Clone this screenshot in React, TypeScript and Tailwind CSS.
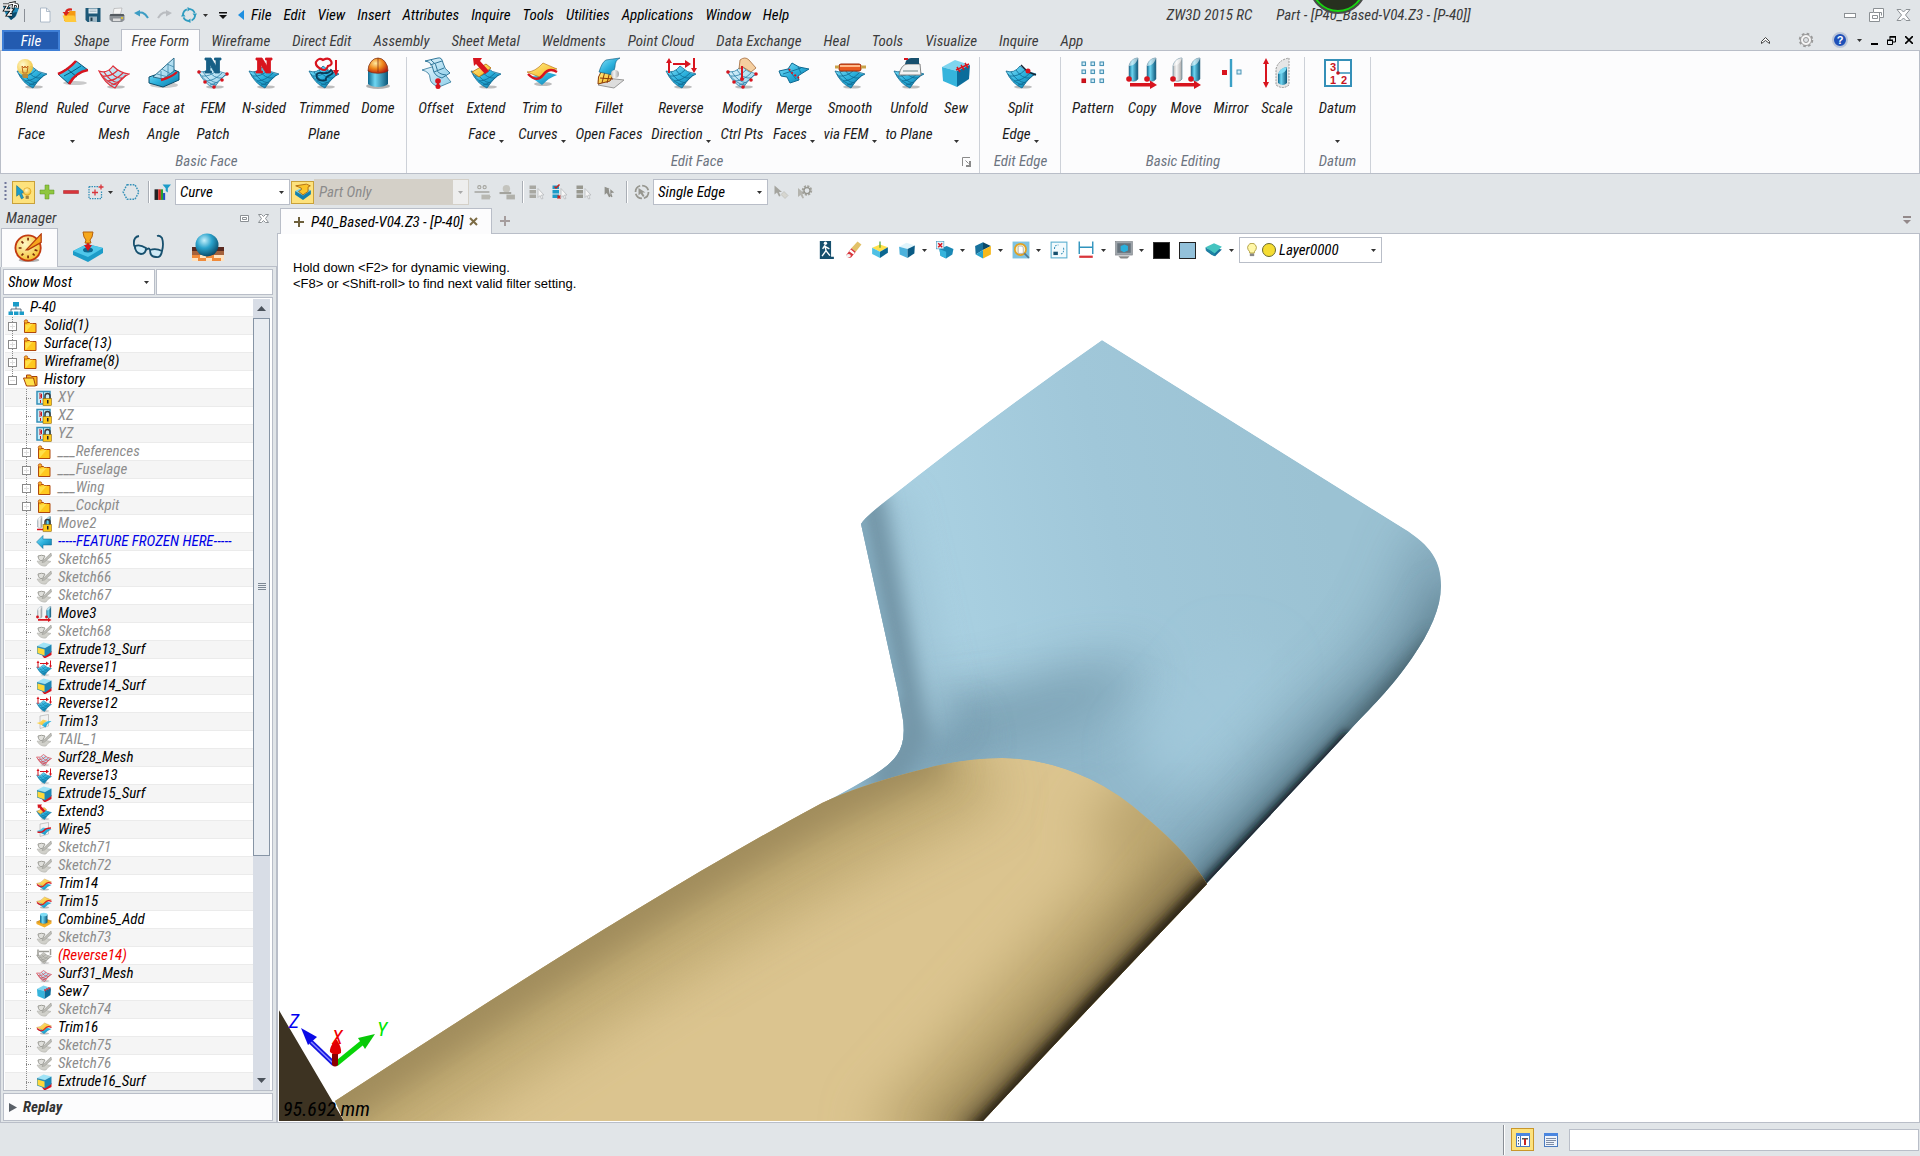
import React from "react";

type Kids = { children?: React.ReactNode };

/* ---------- icon building blocks (32 x 32 grid) ---------- */

function Ic({ s = 32, children }: Kids & { s?: number }) {
  return (
    <svg width={s} height={s} viewBox="0 0 32 32" fill="none" aria-hidden="true" className="shrink-0">
      {children}
    </svg>
  );
}

function Defs() {
  return (
    <svg width="0" height="0" className="absolute" aria-hidden="true">
      <defs>
        <linearGradient id="cy" x1="0" y1="0" x2="1" y2="1">
          <stop offset="0" stopColor="#8be2f8" />
          <stop offset=".5" stopColor="#2bb0dc" />
          <stop offset="1" stopColor="#0e75a2" />
        </linearGradient>
        <linearGradient id="cyl" x1="0" y1="0" x2="1" y2="0">
          <stop offset="0" stopColor="#0d6a92" />
          <stop offset=".35" stopColor="#6fd6f2" />
          <stop offset="1" stopColor="#0a5578" />
        </linearGradient>
        <linearGradient id="pale" x1="0" y1="0" x2="1" y2="1">
          <stop offset="0" stopColor="#e3f4fc" />
          <stop offset="1" stopColor="#8fcfea" />
        </linearGradient>
        <linearGradient id="gold" x1="0" y1="0" x2="1" y2="1">
          <stop offset="0" stopColor="#fff08a" />
          <stop offset="1" stopColor="#f5ae16" />
        </linearGradient>
        <linearGradient id="grey" x1="0" y1="0" x2="1" y2="0">
          <stop offset="0" stopColor="#b9b9b9" />
          <stop offset=".4" stopColor="#f4f4f4" />
          <stop offset="1" stopColor="#a5a5a5" />
        </linearGradient>
        <radialGradient id="dome" cx=".38" cy=".35" r=".7">
          <stop offset="0" stopColor="#ffe9a0" />
          <stop offset=".5" stopColor="#f08a1c" />
          <stop offset="1" stopColor="#b51d10" />
        </radialGradient>
        <radialGradient id="ball" cx=".38" cy=".3" r=".75">
          <stop offset="0" stopColor="#c5f0fb" />
          <stop offset=".45" stopColor="#2ba3cc" />
          <stop offset="1" stopColor="#08425f" />
        </radialGradient>
        <radialGradient id="sunny" cx=".38" cy=".35" r=".7">
          <stop offset="0" stopColor="#fff9c8" />
          <stop offset="1" stopColor="#f2bd27" />
        </radialGradient>
      </defs>
    </svg>
  );
}

function Patch({ fill = "url(#cy)", line = "#0f6a92", dots = false, w = 0.8 }: { fill?: string; line?: string; dots?: boolean; w?: number }) {
  return (
    <g>
      <ellipse cx="18" cy="30" rx="9" ry="1.6" fill="#000" opacity=".25" />
      <path d="M1 14Q9 17 15 9Q22 16 31 17Q24 20 17 31Q7 27 1 14Z" fill={fill} stroke={line} strokeWidth={w} />
      <path
        d="M5 19Q13 20 20 13M9 24Q17 24 25 16M6 15Q12 25 21 26M11 13Q17 22 25 21M13 28Q20 27 28 18M3 17Q10 27 19 28"
        stroke={line}
        strokeWidth={w}
      />
      {dots && (
        <g fill="#d8141e">
          <circle cx="2" cy="15" r="1.8" />
          <circle cx="30" cy="17" r="1.8" />
          <circle cx="17" cy="30" r="1.8" />
          <circle cx="8" cy="25" r="1.8" />
          <circle cx="25" cy="23" r="1.8" />
        </g>
      )}
    </g>
  );
}

const Bulb = () => (
  <g>
    <circle cx="9" cy="10" r="8" fill="url(#sunny)" opacity=".92" />
    <path d="M7 16L6 9l2 2 1-2 1 2 2-2-1 7z" stroke="#c0641a" />
    <path d="M6 17h6v4H7z" fill="#b98b3a" />
  </g>
);

const NGlyph = ({ fill }: { fill: string }) => (
  <path d="M8 16V14h1.500V3H8V1h6l5 8V3h-1.500V1H24v2h-1.500v13H18l-5-8v6h1.500v2z" fill={fill} stroke={fill} strokeWidth=".8" />
);

const Cube = ({ a = "#9fe3f6", b = "#2099c6", c = "#0a5b85" }: { a?: string; b?: string; c?: string }) => (
  <g>
    <path d="M2 10L15 3l15 5-13 6z" fill={a} />
    <path d="M2 10l15 4v16L3 24z" fill={b} />
    <path d="M30 8L17 14v16l12-8z" fill={c} />
  </g>
);

const Prism = ({ x, fill }: { x: number; fill: string }) => (
  <g transform={`translate(${x} 0)`}>
    <path d="M0 9C1 4 5 1 9 1v21c-2 3-7 3-9 0z" fill={fill} stroke="#4d7890" strokeWidth=".6" />
    <path d="M0 9C1 4 5 1 9 1c-1 4-4 8-9 8z" fill="#fff" opacity=".55" />
  </g>
);

const RightArrow = () => <path d="M4 26h20v-2.500l7 4.500-7 4V29.500H4z" fill="#d8141e" />;

const Lock = () => (
  <g>
    <path d="M18 18v-6a5 5 0 0 1 10 0v6" stroke="#3a3a3a" strokeWidth="3" />
    <rect x="14" y="17" width="17" height="14" fill="#fdc81a" stroke="#7a5200" />
    <path d="M22 20h3v7h-3z" fill="#222" />
  </g>
);

const icons: Record<string, React.ReactNode> = {
  blend: (<><Patch /><Bulb /></>),
  ruled: (
    <>
      <ellipse cx="18" cy="26" rx="12" ry="2" fill="#000" opacity=".2" />
      <path d="M1 17Q10 13 19 4l12 9Q19 16 12 27z" fill="url(#cy)" stroke="#0b567a" />
      <path d="M7 19Q15 15 24 9M9 11l11 9" stroke="#0b567a" />
      <path d="M1 17Q11 13 19 4M12 27Q19 15 31 13" stroke="#d8141e" strokeWidth="2.600" />
    </>
  ),
  mesh: <Patch fill="url(#pale)" line="#e0303a" w={1.2} />,
  faceat: (
    <>
      <ellipse cx="16" cy="28" rx="14" ry="3" fill="#000" opacity=".2" />
      <path d="M1 20L24 12l7 3v8L15 30 1 26z" fill="url(#cy)" stroke="#0b4c6c" />
      <path d="M5 20L26 1v13L15 22z" fill="url(#pale)" stroke="#2a6d8c" />
      <path d="M9 17l11 3M14 12l9 5M19 7l7 3M13 14v8M20 7v11" stroke="#3b86a8" strokeWidth=".8" />
      <path d="M13 23Q24 20 29 15" stroke="#d8141e" strokeWidth="2.400" />
    </>
  ),
  fem: (<><Patch fill="url(#pale)" line="#2a7ea6" dots /><NGlyph fill="#175f86" /></>),
  nsided: (<><Patch /><NGlyph fill="#d8141e" /></>),
  trimmed: (
    <>
      <Patch />
      <path d="M9 21q-2-6 5-5t9-3q4 3-1 5t-4 5q-6 2-9-2z" stroke="#0a3b58" strokeWidth="1.800" />
      <path d="M8 5q3-5 7-2 6-3 8 1 2 4-3 5-2 6-7 3Q7 9 8 5z" stroke="#d8141e" strokeWidth="2.200" />
      <path d="M28 3v12" stroke="#d8141e" strokeWidth="2" />
      <path d="M25 13h6l-3 6z" fill="#d8141e" />
    </>
  ),
  dome: (
    <>
      <ellipse cx="16" cy="29" rx="12" ry="3" fill="#000" opacity=".3" />
      <path d="M6 13h20v14c-4 4-16 4-20 0z" fill="url(#cyl)" />
      <path d="M6 14a10 13 0 0 1 20 0c-5 3-15 3-20 0z" fill="url(#dome)" stroke="#7a2a10" strokeWidth=".7" />
      <path d="M16 1v14" stroke="#7a2a10" strokeWidth=".7" />
    </>
  ),
  offset: (
    <>
      <path d="M2 13Q10 15 10 21T19 30L31 25Q26 20 24 14T15 9z" fill="url(#pale)" stroke="#2f7699" strokeWidth=".8" />
      <path d="M5 4Q12 5 13 12T22 21L30 16Q24 12 23 6T18 1z" fill="url(#pale)" stroke="#2f7699" />
      <path d="M11 3q6 4 6 9t9 6M10 8l12-4M14 15l10-4" stroke="#2f7699" />
      <path d="M18 25v5" stroke="#d8141e" strokeWidth="2" />
      <circle cx="18" cy="24" r="2.800" fill="#d8141e" />
      <circle cx="18" cy="29.500" r="2.500" fill="#d8141e" />
    </>
  ),
  extend: (
    <>
      <Patch />
      <path d="M2 15l14-8 5 4-12 9z" fill="url(#gold)" stroke="#b46a0a" strokeWidth=".8" />
      <path d="M3 1h9l-2 3 9 10-4 3L6 7 4 9z" fill="#d8141e" />
    </>
  ),
  trim: (
    <>
      <ellipse cx="17" cy="27" rx="9" ry="2" fill="#000" opacity=".25" />
      <path d="M3 19q8 1 14-5l14 4Q24 20 16 28z" fill="url(#cy)" />
      <path d="M1 15Q9 15 17 6l14 6q-9 0-15 9z" fill="url(#gold)" stroke="#b46a0a" strokeWidth=".6" />
      <path d="M2 17q9 9 15 1t14-3" stroke="#d8141e" strokeWidth="2.400" />
    </>
  ),
  fillet: (
    <>
      <path d="M5 28l8-7 18 2-10 8z" fill="#ddd" stroke="#999" />
      <path d="M5 27Q4 20 9 13l14 1q-4 5-6 10z" fill="url(#gold)" stroke="#8a3a08" />
      <path d="M7 21l13 1M12 14l-3 12M17 14l-3 12" stroke="#8a3a08" />
      <path d="M6 15Q9 5 13 3q6-1 14-2-5 2-5 9-1 3-2 8z" fill="url(#cy)" stroke="#0b567a" strokeWidth=".6" />
      <circle cx="22" cy="17" r="4" fill="url(#grey)" />
    </>
  ),
  reverse: (
    <>
      <Patch />
      <path d="M4 16V4M29 1v12" stroke="#d8141e" strokeWidth="2" />
      <path d="M1 6l3-5 3 5zM26 11h6l-3 5z" fill="#d8141e" />
      <path d="M8 6h12V3l6 4-6 4V8H8z" fill="#d8141e" />
    </>
  ),
  modify: (
    <>
      <Patch fill="url(#pale)" line="#2a7ea6" dots />
      <path d="M14 3q5-4 9 0l7 8-5 4-8-5-4 2z" fill="#f5cfa0" stroke="#a2683a" strokeWidth=".8" />
      <path d="M16 9v12" stroke="#d8141e" strokeWidth="2" />
      <circle cx="16" cy="22" r="2" fill="#d8141e" />
    </>
  ),
  merge: (
    <>
      <path d="M1 14l9-2 4-6 7 4 10 2-8 5-3 2 1 4-9 3-3-6-6-1z" fill="url(#cy)" stroke="#0f6a92" />
      <path d="M5 17l18-6M10 12l8 10M20 10l3 6" stroke="#0f6a92" strokeWidth=".8" />
      <path d="M11 12l3 4 7 5" stroke="#d8141e" strokeWidth="1.800" strokeDasharray="2 2" />
    </>
  ),
  smooth: (
    <>
      <Patch />
      <rect x="5" y="7" width="22" height="7" rx="2" fill="#e85a20" stroke="#9c2a0a" />
      <rect x="6" y="8" width="20" height="2" fill="#ffb98a" />
      <path d="M1 10h4M27 10h5" stroke="#c9a24a" strokeWidth="3" />
    </>
  ),
  unfold: (
    <>
      <Patch />
      <path d="M6 18q2-11 9-11h12l1 11z" fill="#f3f3f3" stroke="#888" />
      <path d="M12 7q1-6 6-6h8v6" fill="#18506e" />
      <path d="M10 14h15" stroke="#9aa" strokeWidth="1.500" />
      <path d="M11 2h4" stroke="#d8141e" strokeWidth="2" />
    </>
  ),
  sew: (
    <>
      <Cube a="#7fd5ef" b="#35b4dc" c="#0b6d9b" />
      <path d="M16 13l13-6M17 10l3 5M21 8l3 5M25 6l3 5" stroke="#d8141e" strokeWidth="1.500" />
    </>
  ),
  split: (
    <>
      <Patch />
      <path d="M16 8l7 7 8 3" stroke="#123" strokeWidth="1.400" />
      <circle cx="23" cy="14" r="2.500" fill="#d8141e" />
    </>
  ),
  pattern: (
    <>
      {[5, 14, 23].map((x) =>
        [5, 13, 22].map((y) => (
          <rect key={`${x}-${y}`} x={x} y={y} width="3.500" height="3.500" fill={x === 5 && y === 22 ? "#d8141e" : "#d5eef8"} stroke={x === 5 && y === 22 ? "#c01018" : "#4a93b5"} strokeWidth="1.100" />
        ))
      )}
    </>
  ),
  copy: (
    <>
      <Prism x={3} fill="url(#cyl)" />
      <Prism x={21} fill="url(#cyl)" />
      <circle cx="3" cy="22" r="2.800" fill="#d8141e" />
      <circle cx="21" cy="22" r="2.800" fill="#d8141e" />
      <RightArrow />
    </>
  ),
  move: (
    <>
      <Prism x={3} fill="url(#grey)" />
      <Prism x={21} fill="url(#cyl)" />
      <circle cx="3" cy="22" r="2.800" fill="#d8141e" />
      <circle cx="21" cy="22" r="2.800" fill="#d8141e" />
      <RightArrow />
    </>
  ),
  mirror: (
    <>
      <path d="M16 2v28" stroke="#3aa0c6" strokeWidth="2.400" />
      <rect x="7" y="13" width="5" height="5" fill="#d8141e" />
      <rect x="22" y="13" width="4" height="4" fill="#d5eef8" stroke="#4a93b5" />
    </>
  ),
  scale: (
    <>
      <path d="M5 5v22" stroke="#d8141e" strokeWidth="2" />
      <path d="M2 7l3-6 3 6zM2 25h6l-3 6z" fill="#d8141e" />
      <path d="M15 12q2-9 13-11v27q-6 5-13 0z" fill="#e6e6e6" stroke="#999" strokeDasharray="2 1" />
      <path d="M17 17q2-6 9-7v16q-4 4-9 0z" fill="url(#cyl)" />
      <path d="M17 17q2-6 9-7-1 7-9 7z" fill="#7fdcf5" />
    </>
  ),
  datum: (
    <>
      <rect x="3" y="3" width="26" height="26" fill="#fff" stroke="#3590b8" strokeWidth="2" />
      <path d="M16 3v13h13" stroke="#3590b8" strokeWidth="1.600" />
      <g fill="#c8141e" fontFamily="Liberation Sans, sans-serif" fontWeight="700" fontStyle="normal" fontSize="11">
        <text x="8" y="14">3</text>
        <text x="8" y="27">1</text>
        <text x="19" y="27">2</text>
      </g>
      <circle cx="16" cy="16" r="1.800" fill="#c8141e" />
    </>
  ),
  folder: (
    <>
      <path d="M5 9h10l2 2h11v18H5z" fill="#ffc81e" stroke="#b0480c" strokeWidth="2" />
      <path d="M7 28V14L22 11z" fill="#ffe04a" />
      <circle cx="8" cy="7" r="3.500" fill="#fbb72d" stroke="#b0480c" strokeWidth="1.500" />
    </>
  ),
  open: (
    <>
      <path d="M9 6h8l2 3h11v18H9z" fill="#f9b81c" stroke="#a8420a" strokeWidth="2" />
      <path d="M3 12h20l4 16H9z" fill="#ffe14a" stroke="#a8420a" strokeWidth="2" />
    </>
  ),
  root: (
    <>
      <path d="M16 10v8M6 24v-6h20v6" stroke="#345" strokeWidth="1.500" />
      <path d="M10 4h12v9H10zM1 23h9v7H1zM12 23h9v7h-9zM23 23h9v7h-9z" fill="#1c9cc8" />
    </>
  ),
  plane: (
    <>
      <rect x="2" y="3" width="26" height="25" fill="#c9ecf8" stroke="#3590b8" strokeWidth="3" />
      <path d="M15 3v25" stroke="#3590b8" strokeWidth="2" />
      <path d="M6 8h5v4H7h4v4H6M9 20v6" stroke="#c8141e" strokeWidth="2" />
      <Lock />
    </>
  ),
  moveLock: (
    <>
      <Prism x={3} fill="url(#grey)" />
      <Prism x={20} fill="url(#cyl)" />
      <path d="M2 27h12" stroke="#d8141e" strokeWidth="3" />
      <Lock />
    </>
  ),
  frozen: <path d="M1 16L14 3v7h17v12H14v7z" fill="url(#cy)" stroke="#0b6790" />,
  sketch: (
    <>
      <path d="M2 18q6 2 10-3l18 4q-7 3-10 9Q8 30 2 18z" fill="#d0d0ca" stroke="#a8a8a2" />
      <path d="M4 8q7-3 14 0l-5 9q-8 2-9-9z" fill="#e0e0dc" stroke="#9c9c96" strokeWidth="2" />
      <path d="M30 2L14 17l-2 4 5-1L31 8z" fill="#bcbcb6" stroke="#94948e" />
    </>
  ),
  extrude: (
    <>
      <path d="M12 27l19-9v8l-14 7z" fill="#d8141e" />
      <path d="M2 8L15 1l16 4-13 7z" fill="#9fe3f6" />
      <path d="M2 8l16 4v17L2 23z" fill="#2b8fb8" />
      <path d="M3 11l14 4v12L3 22z" fill="#ffd83a" />
      <path d="M31 5l-13 7v17l13-9z" fill="#1c86b4" />
    </>
  ),
  trimPlane: (
    <>
      <path d="M8 4l17-3v23L8 29z" fill="#f2f2f2" stroke="#999" />
      <path d="M1 18q8-1 13-7l9 3q-7 1-9 9z" fill="url(#gold)" />
      <path d="M12 23q5-10 19-9-8 4-12 13z" fill="url(#cy)" />
    </>
  ),
  wire: (
    <>
      <path d="M8 4l17-3v23L8 29z" fill="#f2f2f2" stroke="#999" />
      <path d="M1 18q8-1 13-7l17 4q-9 3-13 11z" fill="url(#cy)" />
      <path d="M3 20q9 2 13-3t14-5" stroke="#d8141e" strokeWidth="3" />
    </>
  ),
  combine: (
    <>
      <path d="M1 20l15-7 15 5-13 10z" fill="#eda412" stroke="#a8640a" />
      <path d="M8 5h15v16q-7 5-15 0z" fill="url(#cyl)" />
      <ellipse cx="15.500" cy="5" rx="7.500" ry="3.500" fill="#7fdcf5" />
      <path d="M1 20l15 6 15-7v4l-14 8-16-7z" fill="#f4b028" />
    </>
  ),
  greyReverse: (
    <>
      <Patch fill="#c4c4be" line="#8c8c86" />
      <path d="M4 16V3M29 2v12M6 7h20" stroke="#9a9a94" strokeWidth="3" />
    </>
  ),
};

const Icon = ({ n, s = 32 }: { n: string; s?: number }) => <Ic s={s}>{icons[n]}</Ic>;

const Caret = ({ c = "#333" }: { c?: string }) => (
  <svg width="5" height="3" viewBox="0 0 5 3" aria-hidden="true" className="shrink-0">
    <path d="M0 0h5L2.500 3z" fill={c} />
  </svg>
);

/* ---------- title bar, menus and ribbon tabs ---------- */

const menus = ["File", "Edit", "View", "Insert", "Attributes", "Inquire", "Tools", "Utilities", "Applications", "Window", "Help"];

function TitleBar() {
  return (
    <header className="relative flex h-[30px] shrink-0 items-center">
      <div className="flex w-[251px] shrink-0 items-center">
        <svg width="18" height="20" viewBox="0 0 18 20" className="ml-[2px] -mt-2" aria-hidden="true">
          <path d="M1 5l16 2-3 8-5 4-5-5z" fill="#1f86b4" />
          <path d="M5 13l4 6 4-3 2-5z" fill="#0c4a6c" />
          <path d="M1 4h5l-3 5h4M7 3l5-1-1 5M9 6l0 6M12 3q5 0 3 4M5 9h5l-4 5h4" stroke="#111" strokeWidth="3" fill="none" />
          <path d="M1 4h5l-3 5h4M7 3l5-1-1 5M9 6l0 6M12 3q5 0 3 4M5 9h5l-4 5h4" stroke="#fff" strokeWidth="1.300" fill="none" />
        </svg>
        <span className="ml-1 h-[13px] w-px bg-[#8a8f96]" />
        <div className="ml-[12px] flex items-center gap-2">
          <button aria-label="New">
            <Ic s={16}><path d="M7 2h12l7 7v21H7z" fill="#fff" stroke="#9ab" strokeWidth="1.500" /><path d="M19 2v7h7" stroke="#9ab" strokeWidth="1.500" /></Ic>
          </button>
          <button aria-label="Open">
            <Ic s={16}><path d="M6 12h9l2-4h12v20H6z" fill="#f59a12" /><path d="M3 17h24l4 13H8z" fill="#ffc93c" /><path d="M22 3Q10 1 8 10H3l7 8 7-8h-4q1-4 9-3z" fill="#d8241e" /></Ic>
          </button>
          <button aria-label="Save">
            <Ic s={16}><path d="M1 2h30v28H5l-4-4z" fill="#1d5877" /><path d="M7 3h18v10H7z" fill="#e4edf2" /><path d="M8 19h16v11H8z" fill="#9fb7c4" /><path d="M11 21h4v7h-4z" fill="#1d3b4c" /><path d="M9 6h14M9 9h14" stroke="#7c97a5" /></Ic>
          </button>
          <button aria-label="Print">
            <Ic s={16}><path d="M10 3l16-1-3 12H8z" fill="#f5f5f5" stroke="#999" /><path d="M3 14h26l2 4v8l-5 4H6l-5-5v-6z" fill="#8b9095" /><path d="M3 14h26l2 4H1z" fill="#555b61" /><path d="M8 23h15v5H8z" fill="#ddd" /><circle cx="26" cy="22" r="2" fill="#f0d020" /></Ic>
          </button>
          <button aria-label="Undo">
            <Ic s={16}><path d="M7 14Q20 5 30 22" stroke="#3d9dc4" strokeWidth="4" /><path d="M2 12l12-6v13z" fill="#3d9dc4" /></Ic>
          </button>
          <button aria-label="Redo">
            <Ic s={16}><path d="M25 14Q12 5 2 22" stroke="#b9bcc0" strokeWidth="4" /><path d="M30 12L18 6v13z" fill="#b9bcc0" /></Ic>
          </button>
          <button aria-label="Regenerate">
            <Ic s={16}><circle cx="16" cy="16" r="12" stroke="#2f9cc0" strokeWidth="3.500" strokeDasharray="13 5.800" /><path d="M13 0l7 4-7 5zM19 32l-7-4 7-5zM0 19l4-7 5 7zM32 13l-4 7-5-7z" fill="#2f9cc0" /></Ic>
          </button>
        </div>
        <div className="ml-[6px] flex items-center gap-[11px]">
          <Caret />
          <svg width="8" height="7" viewBox="0 0 8 7" aria-hidden="true"><path d="M0 0h8v1.500H0zM0 3h8L4 7z" fill="#111" /></svg>
          <svg width="6" height="10" viewBox="0 0 6 10" aria-hidden="true"><path d="M6 0v10L0 5z" fill="#1e8fe0" /></svg>
        </div>
      </div>
      <nav className="flex gap-3 text-black">
        {menus.map((m) => (
          <button key={m}>{m}</button>
        ))}
      </nav>
      <div className="flex flex-1 justify-center gap-6 pl-1 text-[#3a3a3a]">
        <span>ZW3D 2015 RC</span>
        <h1>Part - [P40_Based-V04.Z3 - [P-40]]</h1>
      </div>
      <div className="flex items-center gap-3 pr-[9px]">
        <button aria-label="Minimise window">
          <svg width="13" height="14" viewBox="0 0 13 14"><rect x=".5" y="5.500" width="11" height="4" fill="#fff" stroke="#8b9094" /></svg>
        </button>
        <button aria-label="Restore window">
          <svg width="15" height="14" viewBox="0 0 15 14"><path d="M4.500.5h10v9h-4v4h-10v-9h4z" fill="#fff" stroke="#8b9094" /><path d="M3.500 7.500h5v3h-5zM9.500 4.500h3v3M5 4.500h5.500v5" fill="none" stroke="#8b9094" /></svg>
        </button>
        <button aria-label="Close window">
          <svg width="15" height="12" viewBox="0 0 15 12"><path d="M1 .5h4L7.500 3 10 .5h4L9.500 6l4.500 5.500h-4L7.500 9 5 11.500H1L5.500 6z" fill="#fff" stroke="#8b9094" /></svg>
        </button>
      </div>
      <svg width="60" height="16" viewBox="0 0 60 16" className="absolute top-0 left-[1308px]" aria-hidden="true">
        <circle cx="30" cy="-15" r="28" fill="#27301f" stroke="#4a4a4a" strokeWidth="2" />
        <circle cx="30" cy="-15" r="26" fill="#27301f" stroke="#19d313" strokeWidth="2" />
      </svg>
    </header>
  );
}

const tabs = ["Shape", "Free Form", "Wireframe", "Direct Edit", "Assembly", "Sheet Metal", "Weldments", "Point Cloud", "Data Exchange", "Heal", "Tools", "Visualize", "Inquire", "App"];

function RibbonTabs() {
  return (
    <div className="flex h-[21px] shrink-0 items-stretch border-b border-[#b9bec8] text-[#3c3c3c]">
      <button className="ml-[2px] h-[21px] w-[58px] border-2 border-[#3f7fd6] bg-[#235bb0] leading-[18px] text-white">File</button>
      <div role="tablist" className="ml-[3px] flex">
        {tabs.map((t) =>
          t === "Free Form" ? (
            <button key={t} role="tab" aria-selected="true" className="-mt-px h-[22px] border border-b-0 border-[#b9bec8] bg-[#fcfcfd] px-[10px] leading-[23px]">{t}</button>
          ) : (
            <button key={t} role="tab" aria-selected="false" className="px-[11px] leading-[22px]">{t}</button>
          )
        )}
      </div>
      <div className="ml-auto flex items-center pr-[7px] text-black">
        <svg width="9" height="7" viewBox="0 0 9 7" className="mr-[28px]"><path d="M.5 6.500v-2l4-4 4 4v2l-4-3z" fill="#fff" stroke="#444" /></svg>
        <button aria-label="Settings" className="mr-[18px]">
          <svg width="16" height="16" viewBox="0 0 16 16" fill="#f5f5f5" stroke="#999">
            <circle cx="8" cy="8" r="6" strokeWidth="2.500" strokeDasharray="2.500 2.200" />
            <circle cx="8" cy="8" r="5.500" />
            <circle cx="8" cy="8" r="2.500" fill="#dfe3e6" />
          </svg>
        </button>
        <button aria-label="Help" className="mr-[9px] flex size-4 items-center justify-center rounded-full border-2 border-[#b9c4d8] bg-[#1e50b8] font-[Liberation_Sans] text-[11px] font-bold text-white not-italic leading-none">?</button>
        <Caret />
        <button aria-label="Minimise document" className="ml-[9px]"><svg width="7" height="10" viewBox="0 0 7 10"><path d="M0 8h7v2H0z" /></svg></button>
        <button aria-label="Restore document" className="ml-[9px]"><svg width="9" height="9" viewBox="0 0 9 9"><path d="M.5 4.500h5v4h-5zM3 4V1h5.500v5H6" fill="none" stroke="#000" /><path d="M0 3.500h6v1.500H0zM2.500 0H9v1.500H2.500z" /></svg></button>
        <button aria-label="Close document" className="ml-[9px]"><svg width="8" height="8" viewBox="0 0 8 8"><path d="M0 0l8 8M8 0L0 8" stroke="#000" strokeWidth="1.600" /></svg></button>
      </div>
    </div>
  );
}

/* ---------- ribbon ---------- */

type Tool = { i: string; a: string; b?: string; drop?: boolean; w: string };

const groups: { name: string; pad: string; launcher?: boolean; tools: Tool[] }[] = [
  {
    name: "Basic Face",
    pad: "pl-[10px] pr-[4px]",
    tools: [
      { i: "blend", a: "Blend", b: "Face", w: "w-[41px]" },
      { i: "ruled", a: "Ruled", drop: true, w: "w-[41px]" },
      { i: "mesh", a: "Curve", b: "Mesh", w: "w-[42px]" },
      { i: "faceat", a: "Face at", b: "Angle", w: "w-[57px]" },
      { i: "fem", a: "FEM", b: "Patch", w: "w-[42px]" },
      { i: "nsided", a: "N-sided", w: "w-[60px]" },
      { i: "trimmed", a: "Trimmed", b: "Plane", w: "w-[60px]" },
      { i: "dome", a: "Dome", w: "w-[48px]" },
    ],
  },
  {
    name: "Edit Face",
    pad: "pl-[9px] pr-[1px]",
    launcher: true,
    tools: [
      { i: "offset", a: "Offset", w: "w-[40px]" },
      { i: "extend", a: "Extend", b: "Face", drop: true, w: "w-[60px]" },
      { i: "trim", a: "Trim to", b: "Curves", drop: true, w: "w-[52px]" },
      { i: "fillet", a: "Fillet", b: "Open Faces", w: "w-[82px]" },
      { i: "reverse", a: "Reverse", b: "Direction", drop: true, w: "w-[62px]" },
      { i: "modify", a: "Modify", b: "Ctrl Pts", w: "w-[60px]" },
      { i: "merge", a: "Merge", b: "Faces", drop: true, w: "w-[44px]" },
      { i: "smooth", a: "Smooth", b: "via FEM", drop: true, w: "w-[68px]" },
      { i: "unfold", a: "Unfold", b: "to Plane", w: "w-[50px]" },
      { i: "sew", a: "Sew", drop: true, w: "w-[44px]" },
    ],
  },
  { name: "Edit Edge", pad: "pl-[1px] pr-0", tools: [{ i: "split", a: "Split", b: "Edge", drop: true, w: "w-[79px]" }] },
  {
    name: "Basic Editing",
    pad: "pl-[6px] pr-[5px]",
    tools: [
      { i: "pattern", a: "Pattern", w: "w-[52px]" },
      { i: "copy", a: "Copy", w: "w-[46px]" },
      { i: "move", a: "Move", w: "w-[42px]" },
      { i: "mirror", a: "Mirror", w: "w-[48px]" },
      { i: "scale", a: "Scale", w: "w-[44px]" },
    ],
  },
  { name: "Datum", pad: "px-0", tools: [{ i: "datum", a: "Datum", drop: true, w: "w-[65px]" }] },
];

function Ribbon() {
  return (
    <section className="flex h-[123px] shrink-0 border-r border-b border-l border-[#b9bec8] bg-[#fcfcfd] pt-[6px]">
      {groups.map((grp) => (
        <div key={grp.name} className={`relative flex flex-col border-r border-[#cdd1d8] ${grp.pad}`}>
          <div className="flex flex-1">
            {grp.tools.map((t) => (
              <button key={t.a} className={`flex shrink-0 flex-col items-center whitespace-nowrap text-[#1b1b1b] ${t.w}`}>
                <Icon n={t.i} />
                <span className="mt-[6px] leading-[26px]">{t.a}</span>
                <span className="flex h-[26px] items-center leading-[26px]">
                  {t.b}
                  {t.drop && (
                    <span className={t.b ? "mt-[14px] ml-[3px]" : "mt-[14px]"}>
                      <Caret />
                    </span>
                  )}
                </span>
              </button>
            ))}
          </div>
          <h2 className="h-[24px] text-center leading-[24px] text-[#6c7480]">{grp.name}</h2>
          {grp.launcher && (
            <button aria-label="Edit Face options" className="absolute right-[8px] bottom-[6px]">
              <svg width="9" height="10" viewBox="0 0 9 10"><path d="M.5 9V.5H8M3.500 3.500l3 3" fill="none" stroke="#8a8a8a" /><path d="M9 4v6H4V8h3V4z" fill="#8a8a8a" /></svg>
            </button>
          )}
        </div>
      ))}
    </section>
  );
}

/* ---------- selection toolbar ---------- */

function Select({ label, value, w, disabled = false }: { label: string; value: string; w: string; disabled?: boolean }) {
  return (
    <span className={`relative flex h-[26px] items-center border ${w} ${disabled ? "border-[#d4d0c8] bg-[#d4d0c8]" : "border-[#b9bec8] bg-white"}`}>
      <select aria-label={label} disabled={disabled} className={`h-full w-full appearance-none bg-transparent pl-1 italic outline-none ${disabled ? "text-[#8b8b8b]" : "text-black"}`}>
        <option>{value}</option>
      </select>
      <span className={`pointer-events-none absolute inset-y-0 right-0 flex w-[15px] items-center justify-center ${disabled ? "bg-[#eeeeee]" : ""}`}>
        <Caret c={disabled ? "#a9a9a9" : "#333"} />
      </span>
    </span>
  );
}

const Sep = ({ m }: { m: string }) => <span className={`h-[22px] w-[2px] shrink-0 border-l border-[#a9aeb5] bg-white ${m}`} />;

const Slot = ({ label, children, w }: Kids & { label: string; w: string }) => (
  <button aria-label={label} className={`flex h-[22px] shrink-0 items-center justify-center ${w}`}>{children}</button>
);

const Stack = ({ c, mark }: { c: string; mark?: string }) => (
  <Ic s={16}>
    <path d="M1 3h13v7H1zM1 12h13v7H1zM1 21h13v7H1z" fill={c} />
    {mark && <path d="M5 5l3 3 7-7M11 23l6 6M17 23l-6 6" stroke={mark} strokeWidth="3" />}
    <path d="M18 9v18l4-4 3 7 3-1-3-7h5z" fill="#f6f6f6" stroke="#b5b8bb" strokeWidth="1.500" />
  </Ic>
);

function Toolbar() {
  return (
    <div className="flex h-[34px] shrink-0 items-center pt-[2px]">
      <svg width="3" height="20" viewBox="0 0 3 20" className="ml-[4px]" aria-hidden="true"><path d="M1.500 0v20" stroke="#70779a" strokeWidth="2" strokeDasharray="2 2" /></svg>
      <button aria-label="Pick hints" className="ml-[5px] flex size-[23px] items-center justify-center border border-[#c9a13a] bg-[#fde27d]">
        <Ic s={17}><path d="M3 3v20l5-4 4 9 4-2-4-9h7z" fill="#1c9cc8" stroke="#0b6790" /><circle cx="23" cy="14" r="7" fill="url(#sunny)" stroke="#d9930c" /><path d="M20 22h6v6h-6z" fill="#a08040" /></Ic>
      </button>
      <Slot label="Add" w="w-[24px]"><Ic s={16}><path d="M12 2h8v10h10v8H20v10h-8V20H2v-8h10z" fill="#8fc63f" stroke="#5a9020" /></Ic></Slot>
      <Slot label="Remove" w="w-[24px]"><Ic s={16}><path d="M1 13h30v6H1z" fill="#d8353b" stroke="#a81c20" /></Ic></Slot>
      <Slot label="Pick by box" w="w-[25px]"><Ic s={16}><path d="M2 5h18M2 5v24h25V13" stroke="#3590b8" strokeWidth="2.500" strokeDasharray="3 2" /><path d="M14 11v12M8 17h12M26 1v10M21 6h10" stroke="#d8353b" strokeWidth="2.600" /></Ic></Slot>
      <Caret />
      <Slot label="Pick by polygon" w="w-[35px]"><Ic s={18}><path d="M9 3h14l7 13-7 13H9L2 16z" stroke="#3590b8" strokeWidth="2.500" strokeDasharray="3 2" /></Ic></Slot>
      <Sep m="" />
      <Slot label="Filter" w="w-[25px]"><Ic s={17}><path d="M1 10h7v20H1z" fill="#222" /><path d="M8 10h5v20H8z" fill="#d8241e" /><path d="M13 10h4v20h-4z" fill="#28a030" /><path d="M17 17h4v13h-4z" fill="#2050c0" /><path d="M16 1h16l-6 7v8l-4-3V8z" fill="#1c9cc8" /></Ic></Slot>
      <Select label="Pick filter" value="Curve" w="w-[115px]" />
      <button aria-label="Scope" className="ml-px flex size-[23px] items-center justify-center border border-[#c9a13a] bg-[#fde27d]">
        <Ic s={18}><path d="M2 14l14-6 14 5-14 9z" fill="#6fd0ec" /><path d="M2 14v7l14 9V22zM30 13v7l-14 10V22z" fill="#1480ae" /><path d="M3 5l19-3 7 3-4 2v8l-9 6-8-6 5-3V9z" fill="#fbc52a" stroke="#a8640a" strokeWidth="1.500" /></Ic>
      </button>
      <Select label="Pick scope" value="Part Only" w="w-[155px]" disabled />
      <Slot label="Chain" w="w-[26px]"><Ic s={17}><path d="M1 15h28M20 24h11" stroke="#a4a49e" strokeWidth="3" /><circle cx="10" cy="6" r="3" stroke="#a4a49e" strokeWidth="2" /><circle cx="20" cy="6" r="3" stroke="#a4a49e" strokeWidth="2" /><path d="M14 20h16v9H14z" fill="#b8b8b2" /></Ic></Slot>
      <Slot label="Entity" w="w-[24px]"><Ic s={17}><circle cx="14" cy="9" r="7" fill="#c4c4be" /><path d="M1 17h22" stroke="#a4a49e" strokeWidth="4" /><path d="M14 20h16v9H14z" fill="#b0b0aa" /></Ic></Slot>
      <Sep m="ml-[3px] mr-[1px]" />
      <Slot label="Pick list" w="w-[23px]"><Stack c="#a8a8a2" /></Slot>
      <Slot label="Pick list active" w="w-[24px]"><Stack c="#1c9cc8" mark="#c8241e" /></Slot>
      <Slot label="Pick list all" w="w-[24px]"><Stack c="#98988f" /></Slot>
      <Slot label="Pick multiple" w="w-[25px]"><Ic s={14}><path d="M6 4v18l5-4 5 10 3-1V9zM15 6l13 11-7 1 3 9-3 1-4-9z" fill="#90908a" /></Ic></Slot>
      <Sep m="ml-[5px] mr-[2px]" />
      <Slot label="Cycle" w="w-[23px]"><Ic s={16}><circle cx="16" cy="16" r="13" stroke="#96968f" strokeWidth="3.500" strokeDasharray="16 4" /><path d="M9 8v15l4-4 5 7 3-2-4-7h6z" fill="#96968f" /></Ic></Slot>
      <Select label="Edge mode" value="Single Edge" w="w-[115px]" />
      <Slot label="Apply pick" w="w-[25px]"><Ic s={16}><path d="M3 3v18l5-4 4 8 3-1-3-8h6z" fill="#a4a49e" /><path d="M22 15l8 8-6 6-8-8z" fill="#d6d6d0" stroke="#b0b0aa" /></Ic></Slot>
      <Slot label="Pick settings" w="w-[24px]"><Ic s={16}><path d="M2 8v18l5-4 4 7 3-1-3-8h5z" fill="#b4b4ae" /><circle cx="20" cy="13" r="8" stroke="#a4a49e" strokeWidth="5" strokeDasharray="4 2.200" /><circle cx="20" cy="13" r="6" stroke="#96968f" strokeWidth="2.500" /></Ic></Slot>
    </div>
  );
}

/* ---------- manager panel ---------- */

type Row = { i: string; t: string; kind?: "grey" | "blue" | "red"; level: 0 | 1 | 2; box?: "plus" | "minus" };

const g = (t: string, i = "sketch"): Row => ({ i, t, kind: "grey", level: 2 });
const n = (i: string, t: string): Row => ({ i, t, level: 2 });

const rows: Row[] = [
  { i: "root", t: "P-40", level: 0 },
  { i: "folder", t: "Solid(1)", level: 1, box: "plus" },
  { i: "folder", t: "Surface(13)", level: 1, box: "plus" },
  { i: "folder", t: "Wireframe(8)", level: 1, box: "plus" },
  { i: "open", t: "History", level: 1, box: "minus" },
  g("XY", "plane"),
  g("XZ", "plane"),
  g("YZ", "plane"),
  { i: "folder", t: "___References", kind: "grey", level: 2, box: "plus" },
  { i: "folder", t: "___Fuselage", kind: "grey", level: 2, box: "plus" },
  { i: "folder", t: "___Wing", kind: "grey", level: 2, box: "plus" },
  { i: "folder", t: "___Cockpit", kind: "grey", level: 2, box: "plus" },
  g("Move2", "moveLock"),
  { i: "frozen", t: "-----FEATURE FROZEN HERE-----", kind: "blue", level: 2 },
  g("Sketch65"),
  g("Sketch66"),
  g("Sketch67"),
  n("move", "Move3"),
  g("Sketch68"),
  n("extrude", "Extrude13_Surf"),
  n("reverse", "Reverse11"),
  n("extrude", "Extrude14_Surf"),
  n("reverse", "Reverse12"),
  n("trimPlane", "Trim13"),
  g("TAIL_1"),
  n("mesh", "Surf28_Mesh"),
  n("reverse", "Reverse13"),
  n("extrude", "Extrude15_Surf"),
  n("extend", "Extend3"),
  n("wire", "Wire5"),
  g("Sketch71"),
  g("Sketch72"),
  n("trim", "Trim14"),
  n("trim", "Trim15"),
  n("combine", "Combine5_Add"),
  g("Sketch73"),
  { i: "greyReverse", t: "(Reverse14)", kind: "red", level: 2 },
  n("mesh", "Surf31_Mesh"),
  n("sew", "Sew7"),
  g("Sketch74"),
  n("trim", "Trim16"),
  g("Sketch75"),
  g("Sketch76"),
  n("extrude", "Extrude16_Surf"),
];

const rowColor = { grey: "text-[#8d8d8d]", blue: "text-[#0000e6]", red: "text-[#f00000]", none: "text-black" };
const rowPad = ["pl-[3px]", "pl-0", "pl-[14px]"];

function TreeRow({ r, odd }: { r: Row; odd: boolean }) {
  return (
    <li className={`flex h-[18px] items-center border-b border-[#ebebeb] ${rowPad[r.level]} ${odd ? "bg-[#f5f5f5]" : "bg-white"}`}>
      {r.level > 0 && (
        <svg width="17" height="18" viewBox="0 0 17 18" fill="none" stroke="#8a8a8a" className="shrink-0" aria-hidden="true">
          <path d={r.t === "History" ? "M7.500 0v9" : "M7.500 0v18"} strokeDasharray="1 1" />
          <path d="M7 9.500h6" strokeDasharray="1 1" />
          {r.box && <rect x="3.500" y="5.500" width="8" height="8" fill="#fff" />}
          {r.box && <path d={r.box === "plus" ? "M5 9.500h5M7.500 7v5" : "M5 9.500h5"} stroke="#dcdcdc" />}
        </svg>
      )}
      <Icon n={r.i} s={16} />
      <span className={`ml-[6px] whitespace-pre leading-[17px] ${rowColor[r.kind ?? "none"]}`}>{r.t}</span>
    </li>
  );
}

function Manager() {
  return (
    <aside className="flex w-[277px] shrink-0 flex-col">
      <div className="flex h-[20px] shrink-0 items-center pr-[8px] pl-[6px] text-[#3a3a3a]">
        <h2>Manager</h2>
        <button aria-label="Float panel" className="ml-auto"><svg width="9" height="7" viewBox="0 0 9 7"><path d="M.5.500h8v6h-8zM2.500 2.500h4v2h-4z" fill="#fff" stroke="#8b9094" /></svg></button>
        <button aria-label="Close panel" className="ml-[9px]"><svg width="11" height="9" viewBox="0 0 11 9"><path d="M.5.500h3l2 2 2-2h3L7.500 4.500l3 4h-3l-2-2-2 2h-3l3-4z" fill="#fff" stroke="#8b9094" /></svg></button>
      </div>
      <div role="tablist" className="flex h-[39px] shrink-0">
        <button role="tab" aria-selected="true" aria-label="History manager" className="ml-px flex w-[57px] items-center justify-center border border-b-0 border-[#b9bec8] bg-[#fcfcfd] pr-[2px]">
          <Ic s={30}>
            <ellipse cx="16" cy="29" rx="11" ry="2" fill="#000" opacity=".3" />
            <circle cx="15" cy="16" r="13.500" fill="url(#sunny)" stroke="#c23a10" strokeWidth="2" />
            <path d="M15 5v3M5 16h3M22 24l-2-2M8 24l2-2M8 9l2 2M15 27v-3M25 19l-3-1" stroke="#7a2a08" strokeWidth="1.800" />
            <path d="M13 18L29 1v9L15 18z" fill="#f7a51c" stroke="#b5390c" strokeWidth="1.300" />
          </Ic>
        </button>
        <div className="flex flex-1 items-center gap-[28px] border-b border-[#b9bec8] pl-[14px]">
          <button role="tab" aria-selected="false" aria-label="Assembly manager">
            <Ic s={32}>
              <path d="M1 20l14-7 16 4v5l-15 9-15-7z" fill="#1c9cc8" /><path d="M1 20l14-7 16 4-15 9z" fill="#4fc7ea" /><ellipse cx="16" cy="19" rx="5" ry="2.500" fill="#0b6790" />
              <path d="M14.500 11h3v7h-3z" fill="#d8141e" /><path d="M12 14h8l-4 6z" fill="#d8141e" />
              <path d="M11 1h10l-1 5-2 3 1 3h-6l1-3-2-3z" fill="#f6a81c" stroke="#b5600c" />
            </Ic>
          </button>
          <button role="tab" aria-selected="false" aria-label="Visual manager">
            <Ic s={32}>
              <path d="M7 5Q1 6 2 14l2 5M14 19q3-3 4 0M30 20q2-7 0-13-2-3-5-2" stroke="#17506e" strokeWidth="1.800" />
              <path d="M3 15q5-2 11 2 0 6-5 6-6-1-6-8zM18 19q6-2 12 1-1 7-6 6-6 0-6-7z" fill="#cfeaf6" stroke="#17506e" strokeWidth="1.800" />
            </Ic>
          </button>
          <button role="tab" aria-selected="false" aria-label="Render manager">
            <Ic s={32}>
              <path d="M0 16h32v4H0z" fill="#5a2a20" /><path d="M0 20h32v4H0z" fill="#a5623c" /><path d="M0 24h32v6H0z" fill="#ffe3c0" /><path d="M0 24h8v3H0zM14 24h8v3h-8zM6 27h8v3H6zM20 27h9v3h-9z" fill="#f08a3a" />
              <circle cx="15" cy="14" r="11.500" fill="url(#ball)" />
            </Ic>
          </button>
        </div>
      </div>
      <div className="flex min-h-0 flex-1 flex-col gap-[2px] border-r border-b border-l border-[#b9bec8] px-[2px] pt-[2px] pb-px">
        <div className="flex shrink-0 gap-px pr-px">
          <Select label="Tree filter" value="Show Most" w="w-[152px]" />
          <input aria-label="Search tree" className="h-[26px] min-w-0 flex-1 border border-[#b9bec8] bg-white px-1 outline-none" />
        </div>
        <div className="mr-px flex min-h-0 flex-1 border border-[#b9bec8] bg-white pt-px pr-[2px] pl-px">
          <ul className="min-w-0 flex-1 overflow-hidden">
            {rows.map((r, k) => (
              <TreeRow key={r.t} r={r} odd={k % 2 === 1} />
            ))}
          </ul>
          <div className="flex w-[17px] flex-col items-center bg-[#d8dde6]">
            <svg width="9" height="5" viewBox="0 0 9 5" className="my-[7px] shrink-0"><path d="M0 5h9L4.500 0z" fill="#4b525b" /></svg>
            <div className="flex w-full flex-[537] flex-col items-center justify-center gap-[1px] border border-[#8694a5] bg-[#e9edf2]">
              <span className="h-px w-2 bg-[#7d8894]" /><span className="h-px w-2 bg-[#7d8894]" /><span className="h-px w-2 bg-[#7d8894]" /><span className="h-px w-2 bg-[#7d8894]" />
            </div>
            <div className="flex-[216]" />
            <svg width="9" height="5" viewBox="0 0 9 5" className="my-[7px] shrink-0"><path d="M0 0h9L4.500 5z" fill="#4b525b" /></svg>
          </div>
        </div>
        <button className="mr-px flex h-[28px] shrink-0 items-center gap-[6px] border border-[#b9bec8] bg-[#fcfcfd] pl-[5px] font-bold text-[#333]">
          <svg width="8" height="9" viewBox="0 0 8 9"><path d="M0 0v9l8-4.500z" fill="#5a6068" /></svg>
          <span>Replay</span>
        </button>
      </div>
    </aside>
  );
}

/* ---------- 3D view ---------- */

const TAN = "M335 1101C500 994 665 887 822 803Q858 786 912 772Q960 758 1002 758Q1045 758 1090 779Q1118 792 1148 819Q1190 855 1207 884Q1095 1001 983 1121H344Z";
const BLUE = "M1102 340L1403 528C1432 546 1441 562 1441 586C1441 608 1430 632 1412 658C1390 690 1371 707 1349 731L1206 884L1000 900L800 815Q840 795 867 779Q890 766 897 755Q906 742 903 720L898 692L861 524Q864 518 887 500Q990 418 1102 340Z";

function Model() {
  return (
    <svg className="absolute inset-0 h-full w-full" role="img" aria-label="Shaded wing tip surface">
      <defs>
        <clipPath id="clipTan"><path d={TAN} /></clipPath>
        <clipPath id="clipBlue"><path d={BLUE} /></clipPath>
        <filter id="b4" filterUnits="userSpaceOnUse" x="200" y="200" width="1400" height="1100"><feGaussianBlur stdDeviation="4" /></filter>
        <filter id="b9" filterUnits="userSpaceOnUse" x="200" y="200" width="1400" height="1100"><feGaussianBlur stdDeviation="9" /></filter>
        <filter id="b16" filterUnits="userSpaceOnUse" x="200" y="200" width="1400" height="1100"><feGaussianBlur stdDeviation="16" /></filter>
        <filter id="b26" filterUnits="userSpaceOnUse" x="200" y="200" width="1400" height="1100"><feGaussianBlur stdDeviation="26" /></filter>
        <linearGradient id="blueBase" gradientUnits="userSpaceOnUse" x1="940" y1="560" x2="1320" y2="480">
          <stop offset="0" stopColor="#a9d0e1" />
          <stop offset=".45" stopColor="#a0c7d9" />
          <stop offset="1" stopColor="#9bc2d3" />
        </linearGradient>
      </defs>
      <g transform="translate(-279 -236)">
        <path d="M270 995L344 1121L400 1200H270Z" fill="#3d3322" />
        <g clipPath="url(#clipBlue)" fill="none">
          <path d={BLUE} fill="url(#blueBase)" />
          <path d="M800 750L960 715Q1060 705 1130 712L1190 780L1240 880L1150 960H800Z" fill="#90b7ca" filter="url(#b26)" />
          <path d="M890 695Q960 702 1040 676Q1090 655 1150 665Q1130 715 1060 735Q980 760 880 780Z" fill="#7ba1b4" filter="url(#b26)" opacity=".95" />
          <path d="M860 760L980 728" stroke="#799fb2" strokeWidth="46" filter="url(#b16)" opacity=".8" />
          <path d="M1150 770Q1220 710 1250 660" stroke="#a1c8da" strokeWidth="50" filter="url(#b26)" />
          <path d="M872 500L926 735" stroke="#9bc1d3" strokeWidth="70" filter="url(#b16)" opacity=".7" />
          <path d="M868 490L914 735L880 790" stroke="#7396a8" strokeWidth="30" filter="url(#b9)" />
          <path d="M856 515L895 700" stroke="#80a7bb" strokeWidth="16" filter="url(#b4)" />
          <path d="M1475 540Q1440 680 1350 745L1190 915" stroke="#7a9fb1" strokeWidth="120" filter="url(#b26)" opacity=".9" />
          <path d="M1462 600Q1440 660 1366 724L1196 900" stroke="#648797" strokeWidth="50" filter="url(#b16)" />
          <path d="M1440 640L1355 735L1200 896" stroke="#3c545f" strokeWidth="20" filter="url(#b9)" opacity=".9" />
          <path d="M1350 735L1202 892" stroke="#11181c" strokeWidth="12" filter="url(#b4)" />
        </g>
        <g clipPath="url(#clipTan)" fill="none">
          <path d={TAN} fill="#dbc48f" />
          <path d="M1150 760L1250 860L1130 980L940 1190" stroke="#bba56e" strokeWidth="190" filter="url(#b26)" />
          <path d="M1220 860L1120 985L960 1160" stroke="#9c8858" strokeWidth="90" filter="url(#b16)" />
          <path d="M1215 880L1125 975L970 1140" stroke="#6a5b3a" strokeWidth="36" filter="url(#b9)" />
          <path d="M1212 882L1095 1004L975 1135" stroke="#2f2718" strokeWidth="18" filter="url(#b4)" />
          <path d="M280 1130C500 984 665 877 822 793L960 720" stroke="#bda770" strokeWidth="180" filter="url(#b26)" opacity=".9" />
          <path d="M290 1128C500 990 665 883 822 799L940 745" stroke="#a08c5b" strokeWidth="60" filter="url(#b16)" />
        </g>
        <g strokeWidth="5" fill="none">
          <path d="M334 1064L311 1042" stroke="#1414e0" /><path d="M334 1064L311 1042" stroke="#8a8aff" strokeWidth="1.500" />
          <path d="M336 1064L363 1042" stroke="#08d408" />
        </g>
        <path d="M301 1028L317 1037L308 1045Z" fill="#0a0ae6" />
        <path d="M375 1034L358 1038L365 1049Z" fill="#08c808" />
        <path d="M335 1040Q329 1048 330 1052Q335 1057 341 1053Q342 1048 337 1040Z" fill="#e00000" />
        <path d="M332 1054h6v11q-3 3-6 0z" fill="#8c0000" />
        <g fontSize="20" fontStyle="italic">
          <text x="289" y="1028" fill="#0000f0">Z</text>
          <text x="332" y="1044" fill="#f00000">X</text>
          <text x="377" y="1036" fill="#00e600">Y</text>
        </g>
      </g>
    </svg>
  );
}

const VItem = ({ label, children, drop = false }: Kids & { label: string; drop?: boolean }) => (
  <button aria-label={label} className={`flex items-center ${drop ? "gap-[6px]" : ""}`}>
    {children}
    {drop && <Caret />}
  </button>
);

function ViewToolbar() {
  return (
    <div className="absolute top-[1px] left-[538px] flex items-center gap-[9px]">
      <VItem label="Exit"><Ic s={18}><path d="M5 0h20v28h5v4H5z" fill="#17506e" /><circle cx="15" cy="4" r="3" fill="#fff" /><path d="M14 8l-4 6M14 8l2 9-7 10M16 17l7 9M15 10l7 4" stroke="#fff" strokeWidth="2.500" /></Ic></VItem>
      <VItem label="Erase"><Ic s={18}><path d="M24 1l7 5-10 13-8-6z" fill="#e2c168" /><path d="M13 13l8 6-8 10q-7 3-9-4z" fill="#d8353b" /><path d="M12 15l7 6-2 3-8-6z" fill="#fff" /><ellipse cx="8" cy="26" rx="4" ry="3" fill="#f4f4f4" /></Ic></VItem>
      <VItem label="Align view"><Ic s={18}><path d="M2 12l14-6 14 5-14 8z" fill="#ffe14a" /><path d="M2 12l14 7v11L2 23z" fill="#4fc0e4" /><path d="M30 11l-14 8v11l14-9z" fill="#0b6790" /><path d="M16 1v11" stroke="#3a9a30" strokeWidth="2" /></Ic></VItem>
      <VItem label="Display mode" drop><Ic s={18}><Cube a="#e0f5fc" b="#4db2dc" c="#0a5b85" /></Ic></VItem>
      <VItem label="Hide entity" drop><Ic s={18}><path d="M6 14l13-5 12 5-2 10-11 7-10-5z" fill="#1a88b5" /><path d="M6 14l12 5v12l-10-5z" fill="#36b4dc" /><rect x="1" y="1" width="13" height="13" fill="#e6f4fa" stroke="#3590b8" /><path d="M4 4l7 7M11 4l-7 7" stroke="#d8141e" strokeWidth="2.500" /></Ic></VItem>
      <VItem label="Section" drop><Ic s={18}><path d="M2 9L16 2v14L3 24z" fill="#17719c" /><path d="M16 2l14 7-14 7z" fill="#0a4a6a" /><path d="M3 24l13-8v15z" fill="#2ba3cc" /><path d="M16 16l14-7v15l-14 7z" fill="#f6b91c" /></Ic></VItem>
      <VItem label="Zoom" drop><Ic s={18}><rect x="1" y="1" width="30" height="30" fill="#7ec3e2" /><circle cx="15" cy="15" r="10" fill="#f8f0c8" stroke="#e0a020" strokeWidth="3" /><path d="M11 9h7l2 3v10h-9z" fill="#fff" stroke="#888" /><path d="M22 22l8 8" stroke="#55798c" strokeWidth="3" /></Ic></VItem>
      <VItem label="Zoom window"><Ic s={18}><rect x="2" y="2" width="28" height="28" fill="#f2fafd" stroke="#5fb0d0" strokeWidth="2" /><path d="M6 19h8v6H6z" fill="#17506e" /><path d="M8 14q0-7 7-7M24 12q2 9-6 12" stroke="#3590b8" strokeWidth="1.800" strokeDasharray="3 2" /></Ic></VItem>
      <VItem label="Dimension" drop><Ic s={18}><path d="M4 1v22M28 1v22M5 11h22" stroke="#2f93bd" strokeWidth="2.500" /><path d="M4 26h24v4H4z" fill="#d8353b" /></Ic></VItem>
      <VItem label="Render" drop><Ic s={18}><rect x="1" y="1" width="30" height="24" fill="#9ea4aa" stroke="#74797f" /><rect x="4" y="4" width="24" height="17" fill="#65717b" /><path d="M10 9l7-3 6 3v8l-7 3-6-3z" fill="#2bb0dc" /><path d="M6 27h20l-4 4H10z" fill="#888" /></Ic></VItem>
      <button aria-label="Edge colour" className="size-[17px] border border-[#333] bg-black" />
      <button aria-label="Face colour" className="size-[17px] border border-[#222] bg-[#93c1da]" />
      <VItem label="Layers" drop><Ic s={18}><path d="M1 17l14-5 15 3-12 12-6-2z" fill="#17719c" /><path d="M1 11l15-7 14 6-13 12z" fill="#45c4c0" /><path d="M1 11v4l16 12V22z" fill="#1c86a4" /></Ic></VItem>
      <span className="relative -ml-[4px] flex h-[26px] w-[143px] items-center border border-[#b9bec8] bg-white pl-[5px]">
        <Ic s={14}><path d="M11 24h10v6H11z" fill="#888" /><path d="M11 23q0-4-4-8a10 10 0 1 1 18 0q-4 4-4 8z" fill="#fff7a8" stroke="#a08a20" strokeWidth="1.800" /></Ic>
        <span className="ml-[3px] size-[14px] rounded-full border border-[#6a6a30] bg-[#f5dc32]" />
        <select aria-label="Layer" className="h-full min-w-0 flex-1 appearance-none bg-transparent pl-[3px] text-black italic outline-none">
          <option>Layer0000</option>
        </select>
        <span className="pointer-events-none absolute right-[5px]"><Caret /></span>
      </span>
    </div>
  );
}

function Workspace() {
  return (
    <main className="flex min-w-0 flex-1 flex-col">
      <div className="flex h-[26px] shrink-0 items-end">
        <div className="h-full w-[3px] border-b border-[#b9bec8]" />
        <div className="flex h-full w-[212px] shrink-0 items-center border-t border-r border-l border-[#b9bec8] bg-[#fcfcfd] pl-[13px] text-black">
          <svg width="10" height="10" viewBox="0 0 10 10" aria-hidden="true"><path d="M5 0v10M0 5h10" stroke="#6e603c" strokeWidth="2" /></svg>
          <span className="ml-[7px] whitespace-nowrap">P40_Based-V04.Z3 - [P-40]</span>
          <button aria-label="Close tab" className="ml-[6px]"><svg width="9" height="9" viewBox="0 0 9 9"><path d="M1 1l7 7M8 1L1 8" stroke="#7d6c45" strokeWidth="2" /></svg></button>
        </div>
        <div className="flex h-full flex-1 items-center justify-between border-b border-[#b9bec8] pr-[9px] pl-[8px]">
          <button aria-label="New tab"><svg width="10" height="10" viewBox="0 0 10 10"><path d="M5 0v10M0 5h10" stroke="#a59d9d" strokeWidth="2" /></svg></button>
          <button aria-label="Tab list"><svg width="8" height="9" viewBox="0 0 8 9"><path d="M0 0h8v2H0zM0 4h8L4 8z" fill="#93898a" /></svg></button>
        </div>
      </div>
      <div className="relative min-h-0 flex-1 border-r border-b border-l border-[#b9bec8] bg-white p-px pt-[2px]">
        <div className="relative h-full overflow-hidden">
          <Model />
          <p className="absolute top-[24px] left-[14px] font-[Liberation_Sans] text-[13px] leading-[16px] text-black not-italic">
            Hold down &lt;F2&gt; for dynamic viewing.
            <br />
            &lt;F8&gt; or &lt;Shift-roll&gt; to find next valid filter setting.
          </p>
          <ViewToolbar />
          <output className="absolute bottom-0 left-[4px] text-[20px] leading-[24px] text-black">95.692 mm</output>
        </div>
      </div>
    </main>
  );
}

function StatusBar() {
  return (
    <footer className="flex h-[33px] shrink-0 items-center justify-end">
      <span className="h-[30px] w-[2px] border-l border-[#8a8f96] bg-white" />
      <button aria-label="Show manager" className="ml-[6px] flex size-[23px] items-center justify-center border border-[#c9962a] bg-[#fde27d]">
        <svg width="14" height="14" viewBox="0 0 14 14"><rect x=".5" y=".5" width="13" height="13" fill="#fff" stroke="#4a7ac0" /><path d="M0 0h14v3H0z" fill="#4a86e0" /><path d="M4.500 3v10" stroke="#4a7ac0" /><path d="M2.500 4v9" stroke="#456" strokeDasharray="1.500 1.500" /><path d="M6 5h6v1.500H6z" fill="#555" /><path d="M8 6h2v6H8z" fill="#c8241e" /></svg>
      </button>
      <button aria-label="Show output" className="ml-[10px]">
        <svg width="14" height="14" viewBox="0 0 14 14"><rect x=".5" y=".5" width="13" height="13" fill="#eef3fb" stroke="#4a7ac0" /><path d="M0 0h14v3H0z" fill="#4a86e0" /><path d="M2 5.500h10M2 7.500h10M2 9.500h8M2 11.500h8" stroke="#7d8ca5" /></svg>
      </button>
      <input aria-label="Command line" className="mr-px ml-[11px] h-[22px] w-[350px] border border-[#b9bec8] bg-white px-1 outline-none" />
    </footer>
  );
}

export default function App() {
  return (
    <div className="flex h-screen flex-col overflow-hidden bg-[#e1e5e8] font-['Roboto_Condensed','Liberation_Sans_Narrow',Roboto,sans-serif] text-[15px] leading-[20px] italic">
      <Defs />
      <TitleBar />
      <RibbonTabs />
      <Ribbon />
      <Toolbar />
      <div className="flex min-h-0 flex-1">
        <Manager />
        <Workspace />
      </div>
      <StatusBar />
    </div>
  );
}
